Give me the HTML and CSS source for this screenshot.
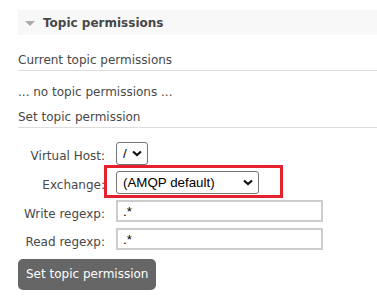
FILE: index.html
```html
<!DOCTYPE html>
<html lang="en">
<head>
    <meta charset="UTF-8">
    <meta name="viewport" content="width=device-width, initial-scale=1.0">
    <title>Topic permissions</title>
    <link rel="stylesheet" href="styles.css">
</head>
<body>

<div class="section">
    <h2 class="section-title">Topic permissions</h2>
    <div class="hider">
        <h3>Current topic permissions</h3>
        <p class="empty">... no topic permissions ...</p>

        <h3>Set topic permission</h3>
        <form class="perm-form">
            <div class="form-grid">
                <label for="vhost">Virtual Host:</label>
                <div class="select-wrap vhost">
                    <select id="vhost">
                        <option value="/">/</option>
                    </select>
                    <svg class="chevron" width="10" height="7" viewBox="0 0 10 7"><path d="M1 1.5 L5 5 L9 1.5" fill="none" stroke="#111" stroke-width="2.2"/></svg>
                </div>

                <label for="exchange">Exchange:</label>
                <div class="select-wrap exchange">
                    <select id="exchange">
                        <option value="">(AMQP default)</option>
                    </select>
                    <svg class="chevron" width="10" height="7" viewBox="0 0 10 7"><path d="M1 1.5 L5 5 L9 1.5" fill="none" stroke="#111" stroke-width="2.2"/></svg>
                    <span class="highlight"></span>
                </div>

                <label for="write">Write regexp:</label>
                <input type="text" id="write" value=".*">

                <label for="read">Read regexp:</label>
                <input type="text" id="read" value=".*">
            </div>
            <button type="submit" class="submit">Set topic permission</button>
        </form>
    </div>
</div>

</body>
</html>
```

FILE: styles.css
```css
body {
    font-family: "DejaVu Sans", Verdana, sans-serif;
    font-size: 12px;
    color: #484848;
    margin: 0;
    background: #fff;
}
.section {
    padding: 10px 0 0 18px;
}
.section-title {
    display: flex;
    align-items: center;
    height: 25px;
    margin: 0;
    padding-left: 7px;
    background: #f8f8f8;
    font-size: 12px;
    font-weight: bold;
    color: #484848;
}
.section-title::before {
    content: "";
    width: 0;
    height: 0;
    border-left: 5px solid transparent;
    border-right: 5px solid transparent;
    border-top: 5px solid #aaa;
    margin-right: 8px;
    margin-top: 1px;
}
h3 {
    font-size: 12px;
    font-weight: normal;
    line-height: 14px;
    margin: 18px 0 0;
    padding-bottom: 3px;
    border-bottom: 1px solid #ddd;
}
.empty {
    margin: 14px 0 11px;
    line-height: 14px;
}
.empty + h3 {
    margin-top: 11px;
}
.perm-form {
    margin-top: 14px;
}
.form-grid {
    display: grid;
    grid-template-columns: 87px auto;
    column-gap: 11px;
    row-gap: 6px;
    justify-items: start;
}
.form-grid label {
    justify-self: end;
    line-height: 14px;
    padding-top: 7px;
}
.select-wrap {
    position: relative;
}
.select-wrap select {
    appearance: none;
    -webkit-appearance: none;
    font-family: "Liberation Sans", Arial, sans-serif;
    font-size: 13.33px;
    color: #000;
    background: #fff;
    border: 1px solid #767676;
    border-radius: 3px;
    height: 23px;
    padding: 0 0 0 6px;
    margin: 0;
}
.vhost select {
    width: 32px;
}
.exchange select {
    width: 143px;
}
.chevron {
    position: absolute;
    right: 6px;
    top: 8px;
    pointer-events: none;
}
.highlight {
    position: absolute;
    left: -12px;
    top: -6px;
    width: 173px;
    height: 27px;
    border: 3px solid #e5222b;
    pointer-events: none;
}
.form-grid input[type="text"] {
    font-family: "Liberation Sans", Arial, sans-serif;
    font-size: 13.33px;
    color: #000;
    width: 207px;
    height: 22px;
    box-sizing: border-box;
    border: 2px solid #ccc;
    padding: 0 5px;
    margin: 0;
}
.submit {
    margin-top: 9px;
    font-family: "DejaVu Sans", Verdana, sans-serif;
    font-size: 12px;
    line-height: 14px;
    color: #fff;
    background: #666;
    border: none;
    border-radius: 5px;
    padding: 8px 8px 9px;
    cursor: pointer;
}
```
